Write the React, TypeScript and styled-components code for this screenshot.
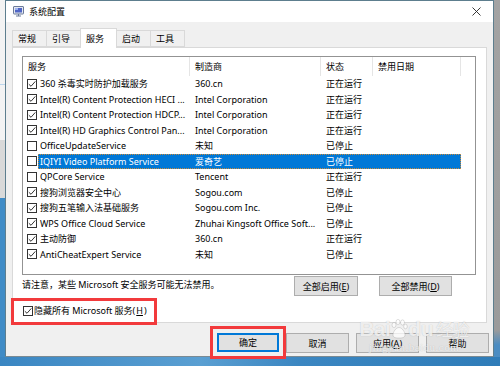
import React from 'react';
import styled, { createGlobalStyle } from 'styled-components';

interface Service {
  name: string;
  maker: string;
  status: string;
  checked: boolean;
  selected?: boolean;
}

const services: Service[] = [
  { name: '360 杀毒实时防护加载服务', maker: '360.cn', status: '正在运行', checked: true },
  { name: 'Intel(R) Content Protection HECI ...', maker: 'Intel Corporation', status: '正在运行', checked: true },
  { name: 'Intel(R) Content Protection HDCP...', maker: 'Intel Corporation', status: '正在运行', checked: true },
  { name: 'Intel(R) HD Graphics Control Pan...', maker: 'Intel Corporation', status: '正在运行', checked: true },
  { name: 'OfficeUpdateService', maker: '未知', status: '已停止', checked: false },
  { name: 'IQIYI Video Platform Service', maker: '爱奇艺', status: '已停止', checked: false, selected: true },
  { name: 'QPCore Service', maker: 'Tencent', status: '正在运行', checked: false },
  { name: '搜狗浏览器安全中心', maker: 'Sogou.com', status: '已停止', checked: true },
  { name: '搜狗五笔输入法基础服务', maker: 'Sogou.com Inc.', status: '已停止', checked: true },
  { name: 'WPS Office Cloud Service', maker: 'Zhuhai Kingsoft Office Soft...', status: '已停止', checked: true },
  { name: '主动防御', maker: '360.cn', status: '正在运行', checked: true },
  { name: 'AntiCheatExpert Service', maker: '未知', status: '已停止', checked: true },
];

const tabs = ['常规', '引导', '服务', '启动', '工具'];

const GlobalStyle = createGlobalStyle`
  html, body {
    margin: 0;
    padding: 0;
  }
  body {
    width: 500px;
    height: 366px;
    overflow: hidden;
    font-family: "Noto Sans", "Noto Sans CJK SC", sans-serif;
    font-size: 9px;
    color: #000;
  }
`;

const Screen = styled.div`
  width: 500px;
  height: 366px;
  display: grid;
  grid-template-columns: 5px 489px 6px;
  grid-template-rows: 357px 9px;
`;

const LeftBg = styled.div`
  background: linear-gradient(
    to bottom,
    #f3f3f3 0,
    #f3f3f3 84px,
    #bcd6ec 84px,
    #bcd6ec 85px,
    #f3f3f3 85px,
    #f3f3f3 140px,
    #d9d9d9 140px,
    #d9d9d9 198px,
    #3f8bc6 198px
  );
`;

const RightBg = styled.div`
  background: linear-gradient(to bottom, #a3a3a3 0, #9b9b9b 330px, #4a8cc2 345px);
`;

const Desktop = styled.div`
  grid-column: 1 / 4;
  background: linear-gradient(to right, #3a86c2 0, #5a9fd2 40%, #3b86c1 60%, #2f7cb8 100%);
`;

const Dialog = styled.div`
  position: relative;
  display: flex;
  flex-direction: column;
  background: #f0f0f0;
  border: 1px solid #5d7e8e;
  border-bottom-color: #7a8a93;
`;

const TitleBar = styled.div`
  height: 21px;
  background: #fff;
  display: flex;
  align-items: center;
  padding: 0 0 0 7px;
  gap: 5px;
`;

const Title = styled.span`
  flex: 1;
  font-size: 9px;
`;

const CloseBtn = styled.div`
  width: 30px;
  height: 21px;
  display: flex;
  align-items: center;
  justify-content: center;
  margin-right: 2px;
`;

const TabStrip = styled.div`
  display: flex;
  align-items: flex-end;
  height: 19px;
  padding: 6px 0 0 6px;
`;

const Tab = styled.div<{ $active?: boolean }>`
  position: relative;
  z-index: ${(p) => (p.$active ? 1 : 0)};
  box-sizing: border-box;
  height: ${(p) => (p.$active ? '20px' : '17px')};
  margin-bottom: ${(p) => (p.$active ? '-1px' : '0')};
  width: ${(p) => (p.$active ? '37px' : '35px')};
  margin-left: -1px;
  padding-left: 5px;
  display: flex;
  align-items: ${(p) => (p.$active ? 'flex-start' : 'center')};
  padding-top: ${(p) => (p.$active ? '3px' : '0')};
  background: ${(p) => (p.$active ? '#fff' : '#f0f0f0')};
  border: 1px solid #d9d9d9;
  border-bottom: ${(p) => (p.$active ? 'none' : '1px solid #d9d9d9')};

  &:first-child {
    margin-left: 0;
  }
`;

const Panel = styled.div`
  margin: 0 6px;
  background: #fff;
  border: 1px solid #d9d9d9;
  padding: 8px 10px 0 9px;
  display: flex;
  flex-direction: column;
`;

const ListView = styled.div`
  height: 217px;
  border: 1px solid #939393;
  background: #fff;
  overflow: hidden;
`;

const HeaderRow = styled.div`
  display: grid;
  grid-template-columns: 167px 131px 52px 88px 1fr;
  height: 19px;
`;

const HeaderCell = styled.div`
  display: flex;
  align-items: center;
  padding-left: 5px;
  border-right: 1px solid #e5e5e5;
  white-space: nowrap;

  &:last-child {
    border-right: none;
  }
`;

const Row = styled.div`
  display: flex;
  height: 15.5px;
`;

const CheckCell = styled.div`
  width: 15px;
  flex: none;
  display: flex;
  align-items: center;
  padding-left: 4px;
  box-sizing: border-box;
`;

const RowBody = styled.div<{ $selected?: boolean }>`
  display: grid;
  grid-template-columns: 152px 131px 52px 88px;
  box-sizing: border-box;
  background: ${(p) => (p.$selected ? '#0078d7' : 'transparent')};
  color: ${(p) => (p.$selected ? '#fff' : '#000')};
  outline: ${(p) => (p.$selected ? '1px dotted #c98a3a' : 'none')};
  outline-offset: -1px;
`;

const Cell = styled.div<{ $pad?: number }>`
  display: flex;
  align-items: center;
  padding-left: ${(p) => p.$pad ?? 5}px;
  white-space: nowrap;
  overflow: hidden;
`;

const Box = styled.span`
  width: 10px;
  height: 10px;
  box-sizing: border-box;
  border: 1px solid #333;
  background: #fff;
  display: inline-flex;
  align-items: center;
  justify-content: center;
  flex: none;
`;

const NoteRow = styled.div`
  display: flex;
  align-items: flex-start;
  margin-top: 1px;
`;

const Note = styled.span`
  flex: 1;
  line-height: 18px;
`;

const Button = styled.button<{ $width: number; $default?: boolean }>`
  width: ${(p) => p.$width}px;
  height: ${(p) => (p.$default ? 19 : 20)}px;
  padding: 0;
  font-family: inherit;
  font-size: 9px;
  color: #000;
  background: #e1e1e1;
  border: 1px solid ${(p) => (p.$default ? '#0078d7' : '#adadad')};
  box-shadow: ${(p) => (p.$default ? 'inset 0 0 0 1px #0078d7' : 'none')};
  flex: none;
`;

const PanelButtons = styled.div`
  display: flex;
  gap: 21px;
  margin-right: 24px;
`;

const HideLabel = styled.label`
  align-self: flex-start;
  display: inline-flex;
  align-items: center;
  gap: 1px;
  line-height: 13px;
  margin: 5px 0 0 -8px;
  padding: 3px 7px 5px 9px;
  outline: 3px solid #f23a3c;
`;

const Footer = styled.div`
  display: flex;
  justify-content: flex-end;
  gap: 7px;
  margin-top: 10px;
  padding-right: 4px;
`;

const RedFrame = styled(Button)`
  outline: 3px solid #f23a3c;
  outline-offset: 4px;
`;

const Watermark = styled.div`
  position: absolute;
  right: 24px;
  bottom: 3px;
  display: flex;
  flex-direction: column;
  align-items: center;
  color: rgba(255, 255, 255, 0.75);
  text-shadow: 0 0 1px rgba(120, 120, 120, 0.45);
  pointer-events: none;
`;

const MarkLogo = styled.div`
  display: flex;
  align-items: center;
  font-family: "Liberation Sans", sans-serif;
  font-size: 21px;
  font-weight: bold;
  letter-spacing: -0.5px;
  line-height: 24px;
`;

const MarkCn = styled.span`
  font-family: "Noto Sans CJK SC", sans-serif;
  font-weight: normal;
  font-size: 17px;
  margin-left: 3px;
`;

const MarkUrl = styled.span`
  font-family: "Liberation Serif", serif;
  font-size: 11px;
  line-height: 12px;
  letter-spacing: 0.5px;
`;

const Check: React.FC<{ checked: boolean }> = ({ checked }) => (
  <Box>
    {checked && (
      <svg width="8" height="8" viewBox="0 0 8 8">
        <path d="M0.8 4.2 L3 6.3 L7.3 1.4" fill="none" stroke="#333" strokeWidth="1" />
      </svg>
    )}
  </Box>
);

const App: React.FC = () => {
  return (
    <>
      <GlobalStyle />
      <Screen>
        <LeftBg />
        <Dialog>
          <TitleBar>
            <svg width="11" height="11" viewBox="0 0 11 11">
              <rect x="0.5" y="0.5" width="10" height="7.5" rx="0.5" fill="#e4e8f0" stroke="#6b7a99" />
              <rect x="2" y="2" width="7" height="4.5" fill="#5066c6" />
              <rect x="2" y="2" width="3" height="2" fill="#9fb3ef" />
              <path d="M3 10h5M5.5 8v2" stroke="#6b7a99" />
            </svg>
            <Title>系统配置</Title>
            <CloseBtn>
              <svg width="9" height="9" viewBox="0 0 9 9">
                <path d="M0.5 0.5 L8.5 8.5 M8.5 0.5 L0.5 8.5" stroke="#222" strokeWidth="0.9" />
              </svg>
            </CloseBtn>
          </TitleBar>

          <TabStrip>
            {tabs.map((t) => (
              <Tab key={t} $active={t === '服务'}>
                {t}
              </Tab>
            ))}
          </TabStrip>

          <Panel>
            <ListView>
              <HeaderRow>
                <HeaderCell>服务</HeaderCell>
                <HeaderCell>制造商</HeaderCell>
                <HeaderCell>状态</HeaderCell>
                <HeaderCell>禁用日期</HeaderCell>
                <HeaderCell />
              </HeaderRow>
              {services.map((s, i) => (
                <Row key={i}>
                  <CheckCell>
                    <Check checked={s.checked} />
                  </CheckCell>
                  <RowBody $selected={s.selected}>
                    <Cell $pad={2}>{s.name}</Cell>
                    <Cell>{s.maker}</Cell>
                    <Cell>{s.status}</Cell>
                    <Cell />
                  </RowBody>
                </Row>
              ))}
            </ListView>

            <NoteRow>
              <Note>请注意，某些 Microsoft 安全服务可能无法禁用。</Note>
              <PanelButtons>
                <Button $width={64}>全部启用(<u>E</u>)</Button>
                <Button $width={73}>全部禁用(<u>D</u>)</Button>
              </PanelButtons>
            </NoteRow>

            <HideLabel>
              <Check checked />
              隐藏所有 Microsoft 服务(<u>H</u>)
            </HideLabel>
          </Panel>

          <Footer>
            <RedFrame $width={62} $default>
              确定
            </RedFrame>
            <Button $width={63}>取消</Button>
            <Button $width={63}>应用(<u>A</u>)</Button>
            <Button $width={63}>帮助</Button>
          </Footer>

          <Watermark>
            <MarkLogo>
              Bai
              <svg width="18" height="20" viewBox="0 0 18 20">
                <g fill="rgba(255,255,255,0.75)" stroke="rgba(120,120,120,0.4)" strokeWidth="0.6">
                  <ellipse cx="4" cy="6" rx="2" ry="2.6" />
                  <ellipse cx="8" cy="3" rx="2" ry="2.6" />
                  <ellipse cx="12.5" cy="3.5" rx="2" ry="2.6" />
                  <ellipse cx="15.5" cy="7.5" rx="1.8" ry="2.3" />
                  <path d="M9 8.5c3 0 6 4.5 6 7.5 0 2.5-2.5 3-6 3s-6-0.5-6-3c0-3 3-7.5 6-7.5z" />
                </g>
              </svg>
              du
              <MarkCn>经验</MarkCn>
            </MarkLogo>
            <MarkUrl>jingyan.baidu.com</MarkUrl>
          </Watermark>
        </Dialog>
        <RightBg />
        <Desktop />
      </Screen>
    </>
  );
};

export default App;
